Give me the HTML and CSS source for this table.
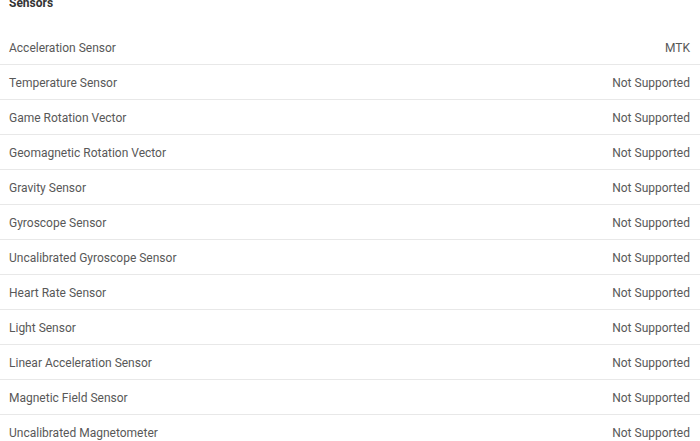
FILE: index.html
```html
<!DOCTYPE html>
<html>
<head>
<meta charset="utf-8">
<link rel="stylesheet" href="styles.css">
</head>
<body>
<div class="page">
  <div class="section-title">Sensors</div>
  <div class="list">
    <div class="row"><span class="label">Acceleration Sensor</span><span class="value">MTK</span></div>
    <div class="row"><span class="label">Temperature Sensor</span><span class="value">Not Supported</span></div>
    <div class="row"><span class="label">Game Rotation Vector</span><span class="value">Not Supported</span></div>
    <div class="row"><span class="label">Geomagnetic Rotation Vector</span><span class="value">Not Supported</span></div>
    <div class="row"><span class="label">Gravity Sensor</span><span class="value">Not Supported</span></div>
    <div class="row"><span class="label">Gyroscope Sensor</span><span class="value">Not Supported</span></div>
    <div class="row"><span class="label">Uncalibrated Gyroscope Sensor</span><span class="value">Not Supported</span></div>
    <div class="row"><span class="label">Heart Rate Sensor</span><span class="value">Not Supported</span></div>
    <div class="row"><span class="label">Light Sensor</span><span class="value">Not Supported</span></div>
    <div class="row"><span class="label">Linear Acceleration Sensor</span><span class="value">Not Supported</span></div>
    <div class="row"><span class="label">Magnetic Field Sensor</span><span class="value">Not Supported</span></div>
    <div class="row"><span class="label">Uncalibrated Magnetometer</span><span class="value">Not Supported</span></div>
  </div>
</div>
</body>
</html>
```

FILE: styles.css
```css
html, body {
  margin: 0;
  padding: 0;
  background: #fff;
  overflow: hidden;
}
.page {
  width: 700px;
  height: 441px;
  overflow: hidden;
  font-family: Roboto, "Liberation Sans", sans-serif;
  font-size: 12px;
  color: #585858;
}
.section-title {
  font-weight: bold;
  color: #333;
  line-height: 14px;
  margin-top: -4px;
  margin-bottom: 20px;
  padding-left: 9px;
}
.row {
  display: flex;
  justify-content: space-between;
  align-items: center;
  height: 33px;
  padding: 1px 10px 0 9px;
  border-bottom: 1px solid #e8e8e8;
}
```
